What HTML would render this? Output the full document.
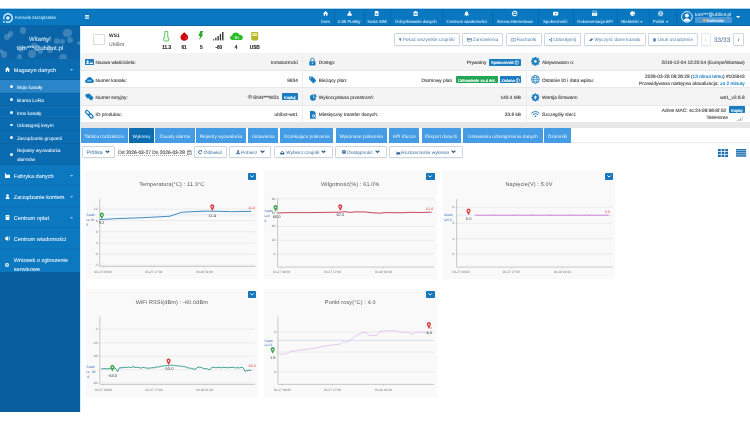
<!DOCTYPE html><html><head><meta charset="utf-8"><style>
*{box-sizing:border-box;margin:0;padding:0}
html,body{width:750px;height:421px;overflow:hidden;background:#fff}
body{font-family:"Liberation Sans",sans-serif;color:#333}
#root{position:absolute;left:0;top:0;width:750px;height:421px;will-change:transform;overflow:hidden;text-rendering:geometricPrecision}
.a{position:absolute}
.t{position:absolute;white-space:nowrap;line-height:1;-webkit-text-stroke-width:0.15px}
svg{position:absolute;overflow:visible}
</style></head><body><div id="root">
<div class="a" style="left:0px;top:8px;width:750px;height:18px;background:#0a78c1"></div>
<div class="a" style="left:0px;top:8px;width:750px;height:1px;background:#9fd4f3"></div>
<div class="a" style="left:0px;top:9px;width:750px;height:1px;background:#0b6eb0"></div>
<div class="a" style="left:0px;top:25px;width:750px;height:1px;background:#0a68a8"></div>
<svg style="left:0px;top:10px" width="20" height="16" viewBox="0 10 20 16"><path d="M3.96 19.47 A4.3 4.3 0 1 1 5.85 21.72" fill="none" stroke="#d4f0ff" stroke-width="1.4"/><circle cx="7.9" cy="18" r="1.8" fill="#e6f7ff"/><rect x="3" y="21.1" width="1.8" height="1.5" fill="#bfe8ff"/></svg>
<div class="t" style="left:15px;top:16px;font-size:4.4px;color:#a9d8f3;">Konsola zarządzania</div>
<div class="a" style="left:85px;top:15.3px;width:4px;height:0.8px;background:#e6f3fb;box-shadow:0 1.4px 0 #e6f3fb,0 2.8px 0 #e6f3fb"></div>
<div class="a" style="left:334px;top:9px;width:1px;height:16px;background:#0a69ab"></div>
<div class="a" style="left:364px;top:9px;width:1px;height:16px;background:#0a69ab"></div>
<div class="a" style="left:390px;top:9px;width:1px;height:16px;background:#0a69ab"></div>
<div class="a" style="left:442px;top:9px;width:1px;height:16px;background:#0a69ab"></div>
<div class="a" style="left:492px;top:9px;width:1px;height:16px;background:#0a69ab"></div>
<div class="a" style="left:538px;top:9px;width:1px;height:16px;background:#0a69ab"></div>
<div class="a" style="left:573px;top:9px;width:1px;height:16px;background:#0a69ab"></div>
<div class="a" style="left:617px;top:9px;width:1px;height:16px;background:#0a69ab"></div>
<div class="a" style="left:649px;top:9px;width:1px;height:16px;background:#0a69ab"></div>
<div class="a" style="left:676px;top:9px;width:1px;height:16px;background:#0a69ab"></div>
<svg style="left:322.59999999999997px;top:11.3px" width="5.2" height="5.2" viewBox="0 0 6 6"><path d="M0 3 L3 0 L6 3 L5.2 3 L5.2 5.5 L3.6 5.5 L3.6 3.8 L2.4 3.8 L2.4 5.5 L0.8 5.5 L0.8 3 Z" fill="#fff"/></svg>
<div class="t" style="left:295.2px;width:60px;text-align:center;top:20px;font-size:4.3px;color:#cfe8f9;-webkit-text-stroke-width:0.05px">Dom</div>
<svg style="left:346.59999999999997px;top:11.3px" width="5.2" height="5.2" viewBox="0 0 6 6"><path d="M1.8 0.3 L4.2 0.3 L3.6 1.6 Q6 3 5.6 5.6 L0.4 5.6 Q0 3 2.4 1.6 Z" fill="#fff"/></svg>
<div class="t" style="left:319.2px;width:60px;text-align:center;top:20px;font-size:4.3px;color:#cfe8f9;-webkit-text-stroke-width:0.05px">0.88 Punkty</div>
<svg style="left:374.4px;top:11.3px" width="5.2" height="5.2" viewBox="0 0 6 6"><path d="M1 0 L4.2 0 L5.2 1 L5.2 5.8 L0.8 5.8 Z" fill="#fff"/><rect x="1.8" y="2.6" width="2.4" height="2.2" fill="#5aa7de"/></svg>
<div class="t" style="left:347.0px;width:60px;text-align:center;top:20px;font-size:4.3px;color:#cfe8f9;-webkit-text-stroke-width:0.05px">Karta SIM</div>
<svg style="left:413.29999999999995px;top:11.3px" width="5.2" height="5.2" viewBox="0 0 6 6"><rect x="0.6" y="0.8" width="4.8" height="5" rx="0.5" fill="#fff"/><rect x="1.8" y="0.2" width="2.4" height="1.2" fill="#fff"/><rect x="1.6" y="2.4" width="2.8" height="2.2" fill="#5aa7de"/></svg>
<div class="t" style="left:385.9px;width:60px;text-align:center;top:20px;font-size:4.3px;color:#cfe8f9;-webkit-text-stroke-width:0.05px">Odzyskiwanie danych</div>
<svg style="left:464.0px;top:11.3px" width="5.2" height="5.2" viewBox="0 0 6 6"><path d="M3 0.2 Q5 0.8 5 3.4 L5.8 4.8 L0.2 4.8 L1 3.4 Q1 0.8 3 0.2 Z" fill="#fff"/><circle cx="3" cy="5.3" r="0.7" fill="#fff"/></svg>
<div class="t" style="left:436.6px;width:60px;text-align:center;top:20px;font-size:4.3px;color:#cfe8f9;-webkit-text-stroke-width:0.05px">Centrum wiadomości</div>
<svg style="left:512.1px;top:11.3px" width="5.2" height="5.2" viewBox="0 0 6 6"><circle cx="3" cy="3" r="2.6" fill="none" stroke="#fff" stroke-width="1.2"/><rect x="1" y="2.6" width="4" height="0.8" fill="#fff"/><rect x="3.6" y="3.4" width="2.4" height="1" fill="#0a78c1"/></svg>
<div class="t" style="left:484.70000000000005px;width:60px;text-align:center;top:20px;font-size:4.3px;color:#cfe8f9;-webkit-text-stroke-width:0.05px">Strona internetowa</div>
<svg style="left:552.6px;top:11.3px" width="5.2" height="5.2" viewBox="0 0 6 6"><rect x="0" y="0.8" width="6" height="4.4" rx="1" fill="#fff"/><path d="M2.4 2 L4 3 L2.4 4 Z" fill="#0a78c1"/></svg>
<div class="t" style="left:525.2px;width:60px;text-align:center;top:20px;font-size:4.3px;color:#cfe8f9;-webkit-text-stroke-width:0.05px">Społeczność</div>
<svg style="left:592.4px;top:11.3px" width="5.2" height="5.2" viewBox="0 0 6 6"><rect x="1" y="0" width="4" height="2.4" fill="none" stroke="#fff" stroke-width="0.6"/><rect x="0" y="2.4" width="6" height="3.2" fill="#fff"/><rect x="1" y="3.4" width="4" height="0.5" fill="#5aa7de"/></svg>
<div class="t" style="left:565.0px;width:60px;text-align:center;top:20px;font-size:4.3px;color:#cfe8f9;-webkit-text-stroke-width:0.05px">Dokumentacja API</div>
<svg style="left:629.6px;top:11.3px" width="5.2" height="5.2" viewBox="0 0 6 6"><circle cx="3" cy="3" r="2.8" fill="#fff"/><circle cx="4" cy="3.8" r="0.6" fill="#0a78c1"/></svg>
<div class="t" style="left:602.2px;width:60px;text-align:center;top:20px;font-size:4.3px;color:#cfe8f9;-webkit-text-stroke-width:0.05px">Niebieski <span style='font-size:3.4px'>▼</span></div>
<svg style="left:658.1999999999999px;top:11.3px" width="5.2" height="5.2" viewBox="0 0 6 6"><circle cx="3" cy="3" r="2.6" fill="none" stroke="#fff" stroke-width="0.7"/><ellipse cx="3" cy="3" rx="1.1" ry="2.6" fill="none" stroke="#fff" stroke-width="0.6"/><line x1="0.4" y1="3" x2="5.6" y2="3" stroke="#fff" stroke-width="0.6"/></svg>
<div class="t" style="left:630.8px;width:60px;text-align:center;top:20px;font-size:4.3px;color:#cfe8f9;-webkit-text-stroke-width:0.05px">Polski <span style='font-size:3.4px'>▼</span></div>
<svg style="left:680.5px;top:11.4px" width="11.8" height="11.8" viewBox="0 0 12 12"><circle cx="6" cy="6" r="5.4" fill="#0a78c1" stroke="#fff" stroke-width="0.9"/><circle cx="6" cy="4.5" r="2" fill="#fff"/><path d="M2.3 9.5 Q6 5.4 9.7 9.5 Q6 12 2.3 9.5 Z" fill="#fff"/></svg>
<div class="t" style="left:695px;top:14px;font-size:4.75px;color:#e3f2fc;-webkit-text-stroke-width:0.05px">tom***@ubibot.pl</div>
<div class="a" style="left:695px;top:17px;width:37px;height:6px;background:#4c98d6;border-radius:0.8px"></div>
<svg style="left:702.8px;top:18.8px" width="2.8" height="2.8" viewBox="0 0 4 4"><circle cx="2" cy="2" r="2" fill="#e6b54f"/></svg>
<div class="t" style="left:706.6px;top:19px;font-size:4.1px;color:#d8ecf9;">Darmowe</div>
<svg style="left:736.4px;top:16px" width="4.2" height="2.2" viewBox="0 0 4 2"><path d="M0 0 L4 0 L2 2 Z" fill="#fff"/></svg>
<div class="a" style="left:0px;top:26px;width:80px;height:386px;background:#095e9d"></div>
<div class="a" style="left:80px;top:26px;width:1px;height:386px;background:#d6edf9"></div>
<div class="a" style="left:0;top:25.5px;width:79.7px;height:33.7px;background:#0b64a8;overflow:hidden">
<div class="a" style="border-radius:50%;background:rgba(255,255,255,0.2);left:19.5px;top:1.4999999999999987px;width:6.8px;height:6.8px"></div>
<div class="a" style="border-radius:50%;background:rgba(255,255,255,0.2);left:3.9000000000000004px;top:8.299999999999997px;width:6px;height:6px"></div>
<div class="a" style="border-radius:50%;background:rgba(255,255,255,0.2);left:7.999999999999999px;top:5.900000000000001px;width:5.4px;height:5.4px"></div>
<div class="a" style="border-radius:50%;background:rgba(255,255,255,0.2);left:63.400000000000006px;top:3.3000000000000016px;width:8.6px;height:8.6px"></div>
<div class="a" style="border-radius:50%;background:rgba(255,255,255,0.2);left:66.5px;top:11.1px;width:6.8px;height:6.8px"></div>
<div class="a" style="border-radius:50%;background:rgba(255,255,255,0.2);left:53.5px;top:12.600000000000001px;width:6px;height:6px"></div>
<div class="a" style="border-radius:50%;background:rgba(255,255,255,0.2);left:60.1px;top:13.8px;width:4.6px;height:4.6px"></div>
<div class="a" style="border-radius:50%;background:rgba(255,255,255,0.2);left:76.80000000000001px;top:15.600000000000003px;width:4.2px;height:4.2px"></div>
<div class="a" style="border-radius:50%;background:rgba(255,255,255,0.2);left:28px;top:24.4px;width:8px;height:8px"></div>
<div class="a" style="border-radius:50%;background:rgba(255,255,255,0.2);left:18.1px;top:19.8px;width:6.4px;height:6.4px"></div>
<div class="a" style="border-radius:50%;background:rgba(255,255,255,0.2);left:31.400000000000002px;top:17.099999999999998px;width:5.4px;height:5.4px"></div>
<div class="a" style="border-radius:50%;background:rgba(255,255,255,0.2);left:-1.0px;top:23.1px;width:4.2px;height:4.2px"></div>
<div class="a" style="border-radius:50%;background:rgba(255,255,255,0.2);left:0.5px;top:25.7px;width:6.4px;height:6.4px"></div>
<div class="a" style="border-radius:50%;background:rgba(255,255,255,0.2);left:16.5px;top:28.900000000000002px;width:5.4px;height:5.4px"></div>
<div class="a" style="border-radius:50%;background:rgba(255,255,255,0.2);left:58.6px;top:28.3px;width:8.6px;height:8.6px"></div>
<div class="a" style="border-radius:50%;background:rgba(255,255,255,0.2);left:46.9px;top:20.900000000000002px;width:6.4px;height:6.4px"></div>
<div class="a" style="border-radius:50%;background:rgba(255,255,255,0.2);left:37.8px;top:23.000000000000004px;width:5.4px;height:5.4px"></div>
<div class="a" style="border-radius:50%;background:rgba(255,255,255,0.2);left:44.8px;top:13.500000000000002px;width:4.2px;height:4.2px"></div>
</div>
<div class="t" style="left:0.5px;width:79px;text-align:center;top:37px;font-size:6.1px;color:#d8edfa;-webkit-text-stroke-width:0.05px">Witamy!</div>
<div class="t" style="left:0.5px;width:79px;text-align:center;top:46px;font-size:6.1px;color:#d8edfa;-webkit-text-stroke-width:0.05px">tom***@ubibot.pl</div>
<div class="a" style="left:0px;top:59px;width:80px;height:21px;background:#0b6bb0;border-bottom:0.5px solid rgba(0,30,60,0.07)"></div>
<div class="t" style="left:13.8px;top:69px;font-size:5.6px;color:#eef7fd;-webkit-text-stroke-width:0.05px">Magazyn danych</div>
<svg style="left:4.9px;top:66.75px" width="5" height="5" viewBox="0 0 4 4"><path d="M0 2 L2 0 L4 2 L3.4 2 L3.4 4 L2.4 4 L2.4 2.8 L1.6 2.8 L1.6 4 L0.6 4 L0.6 2 Z" fill="#fff"/></svg>
<svg style="left:69.8px;top:68.75px" width="3.2" height="1.8" viewBox="0 0 2 1"><path d="M0 0 L2 0 L1 1 Z" fill="#94c8ee"/></svg>
<div class="a" style="left:0px;top:80px;width:80px;height:13px;background:#2a86c8;border-bottom:0.5px solid rgba(0,30,60,0.07)"></div>
<div class="a" style="left:10px;top:85px;width:3px;height:3px;border-radius:50%;background:#f4fafe"></div>
<div class="t" style="left:16.9px;top:87px;font-size:4.8px;color:#eef7fd;-webkit-text-stroke-width:0.05px">Moje kanały</div>
<div class="a" style="left:0px;top:93px;width:80px;height:13px;background:#0b6bb0;border-bottom:0.5px solid rgba(0,30,60,0.07)"></div>
<div class="a" style="left:10px;top:98px;width:3px;height:3px;border-radius:50%;background:#f4fafe"></div>
<div class="t" style="left:16.9px;top:100px;font-size:4.8px;color:#eef7fd;-webkit-text-stroke-width:0.05px">Brama LoRa</div>
<div class="a" style="left:0px;top:106px;width:80px;height:13px;background:#0b6bb0;border-bottom:0.5px solid rgba(0,30,60,0.07)"></div>
<div class="a" style="left:10px;top:111px;width:3px;height:3px;border-radius:50%;background:#f4fafe"></div>
<div class="t" style="left:16.9px;top:113px;font-size:4.8px;color:#eef7fd;-webkit-text-stroke-width:0.05px">Inne kanały</div>
<div class="a" style="left:0px;top:119px;width:80px;height:12px;background:#0b6bb0;border-bottom:0.5px solid rgba(0,30,60,0.07)"></div>
<div class="a" style="left:10px;top:124px;width:3px;height:2px;border-radius:50%;background:#f4fafe"></div>
<div class="t" style="left:16.9px;top:125px;font-size:4.8px;color:#eef7fd;-webkit-text-stroke-width:0.05px">Udostępnij innym</div>
<div class="a" style="left:0px;top:131px;width:80px;height:13px;background:#0b6bb0;border-bottom:0.5px solid rgba(0,30,60,0.07)"></div>
<div class="a" style="left:10px;top:136px;width:3px;height:3px;border-radius:50%;background:#f4fafe"></div>
<div class="t" style="left:16.9px;top:138px;font-size:4.8px;color:#eef7fd;-webkit-text-stroke-width:0.05px">Zarządzanie grupami</div>
<div class="a" style="left:0px;top:144px;width:80px;height:21px;background:#0b6bb0;border-bottom:0.5px solid rgba(0,30,60,0.07)"></div>
<div class="a" style="left:10px;top:153px;width:3px;height:3px;border-radius:50%;background:#f4fafe"></div>
<div class="t" style="left:16.9px;top:150px;font-size:4.8px;color:#eef7fd;-webkit-text-stroke-width:0.05px">Rejestry wyzwalania</div>
<div class="t" style="left:16.9px;top:159px;font-size:4.8px;color:#eef7fd;-webkit-text-stroke-width:0.05px">alarmów</div>
<div class="a" style="left:0px;top:165px;width:80px;height:21px;background:#0c78c0;border-bottom:0.5px solid rgba(0,30,60,0.07)"></div>
<div class="t" style="left:13.8px;top:175px;font-size:5.6px;color:#eef7fd;-webkit-text-stroke-width:0.05px">Fabryka danych</div>
<svg style="left:4.9px;top:173.0px" width="5" height="5" viewBox="0 0 4 4"><path d="M0 4 L0 0.2 L0.9 0.2 L0.9 1.8 L2 1.0 L2 1.8 L3.1 1.0 L3.1 1.8 L4 1.2 L4 4 Z" fill="#fff"/></svg>
<svg style="left:69.8px;top:175.0px" width="3.2" height="1.8" viewBox="0 0 2 1"><path d="M0 0 L2 0 L1 1 Z" fill="#94c8ee"/></svg>
<div class="a" style="left:0px;top:186px;width:80px;height:21px;background:#0c78c0;border-bottom:0.5px solid rgba(0,30,60,0.07)"></div>
<div class="t" style="left:13.8px;top:196px;font-size:5.6px;color:#eef7fd;-webkit-text-stroke-width:0.05px">Zarządzanie kontem</div>
<svg style="left:4.9px;top:194.1px" width="5" height="5" viewBox="0 0 4 4"><circle cx="2" cy="1.1" r="1" fill="#fff"/><path d="M0.4 4 L1 2.2 L3 2.2 L3.6 4 Z" fill="#fff"/></svg>
<svg style="left:69.8px;top:196.1px" width="3.2" height="1.8" viewBox="0 0 2 1"><path d="M0 0 L2 0 L1 1 Z" fill="#94c8ee"/></svg>
<div class="a" style="left:0px;top:207px;width:80px;height:21px;background:#0c78c0;border-bottom:0.5px solid rgba(0,30,60,0.07)"></div>
<div class="t" style="left:13.8px;top:217px;font-size:5.6px;color:#eef7fd;-webkit-text-stroke-width:0.05px">Centrum opłat</div>
<svg style="left:4.9px;top:215.3px" width="5" height="5" viewBox="0 0 4 4"><rect x="0.5" y="0" width="3" height="4" rx="0.4" fill="#fff"/><rect x="1" y="0.8" width="2" height="0.4" fill="#0b70b7"/></svg>
<svg style="left:69.8px;top:217.3px" width="3.2" height="1.8" viewBox="0 0 2 1"><path d="M0 0 L2 0 L1 1 Z" fill="#94c8ee"/></svg>
<div class="a" style="left:0px;top:228px;width:80px;height:22px;background:#0c78c0;border-bottom:0.5px solid rgba(0,30,60,0.07)"></div>
<div class="t" style="left:13.8px;top:238px;font-size:5.6px;color:#eef7fd;-webkit-text-stroke-width:0.05px">Centrum wiadomości</div>
<svg style="left:4.9px;top:236.35px" width="5" height="5" viewBox="0 0 4 4"><path d="M0 1.4 L2.4 0.2 L2.4 3.8 L0 2.6 Z" fill="#fff"/><rect x="3" y="0.4" width="0.6" height="3.2" fill="#fff"/></svg>
<div class="a" style="left:0;top:249.5px;width:79.7px;height:22.2px;background:#0c78c0;overflow:hidden">
<div class="t" style="left:13.8px;top:9px;font-size:5.6px;color:#eef7fd;-webkit-text-stroke-width:0.05px">Wniosek o zgłoszenie</div>
<div class="t" style="left:13.8px;top:18px;font-size:5.6px;color:#eef7fd;-webkit-text-stroke-width:0.05px">serwisowe</div>
</div>
<svg style="left:5.4px;top:263px" width="4" height="4" viewBox="0 0 4 4"><circle cx="2" cy="2" r="2" fill="#fff"/><rect x="1.7" y="0.6" width="0.6" height="2.8" fill="#0c78c0"/><rect x="0.6" y="1.7" width="2.8" height="0.6" fill="#0c78c0"/></svg>
<div class="a" style="left:93px;top:34px;width:12px;height:11px;border:0.6px solid #dcdcdc;border-radius:0.8px;background:#fff"></div>
<div class="t" style="left:109.1px;top:35px;font-size:4.85px;color:#222;font-weight:bold;-webkit-text-stroke-width:0">WS1</div>
<div class="t" style="left:109.1px;top:43px;font-size:5px;color:#8a8a8a;">UbiBot</div>
<svg style="left:163.4px;top:30.8px" width="6.4" height="10.4" viewBox="0 0 6.4 10.4"><path d="M1.7 1.2 Q1.7 0.4 3.2 0.4 Q4.7 0.4 4.7 1.2 L4.7 6.3 Q6 7.1 6 8.3 Q6 10.1 3.2 10.1 Q0.4 10.1 0.4 8.3 Q0.4 7.1 1.7 6.3 Z" fill="#fff" stroke="#6fcb6f" stroke-width="1.1"/><circle cx="3.2" cy="8.3" r="0.9" fill="#dff3df"/></svg>
<svg style="left:180px;top:31.8px" width="8.6" height="8.8" viewBox="0 0 8.6 8.8"><path d="M4.3 0.2 Q6 1.6 7.6 3.6 Q8.8 5.8 7.4 7.4 Q6 8.8 4.3 8.8 Q2.4 8.8 1.2 7.4 Q-0.2 5.6 1 3.6 Q2.4 1.6 4.3 0.2 Z" fill="#cc0a0a"/><path d="M5.6 6.6 L6.6 5.8" stroke="#fff" stroke-width="0.6"/></svg>
<svg style="left:198.4px;top:31px" width="5.6" height="9.2" viewBox="0 0 5.6 9.2"><path d="M2.4 0 L5.2 0 L3.4 3.2 L5.4 3.2 L1 9.2 L2.2 5 L0.4 5 Z" fill="#22aa22"/></svg>
<svg style="left:213.4px;top:32px" width="10.8" height="8.6" viewBox="0 0 10.8 8.6"><rect x="0" y="7.2" width="1.2" height="1.2" fill="#333"/><rect x="2.2" y="5.6" width="1.3" height="2.8" fill="#333"/><rect x="4.5" y="4" width="1.3" height="4.4" fill="#333"/><rect x="6.8" y="2" width="1.3" height="6.4" fill="#333"/><rect x="9.1" y="0" width="1.4" height="8.4" fill="#333"/></svg>
<svg style="left:229.6px;top:31.8px" width="12.8" height="8" viewBox="0 0 12.8 8"><path d="M2.6 8 Q0 8 0 5.6 Q0 3.6 2.2 3.4 Q2.6 0.4 5.8 0.4 Q8.6 0.4 9.4 2.8 Q12.8 2.8 12.8 5.4 Q12.8 8 10.2 8 Z" fill="#2bbb2b"/><text x="6.8" y="6.6" font-size="4.2" font-weight="bold" fill="#e8ffe8" text-anchor="middle" font-family="Liberation Sans">fn</text></svg>
<svg style="left:251px;top:31.8px" width="7.4" height="8.6" viewBox="0 0 7.4 8.6"><path d="M0.2 0.8 Q0.2 0 1 0 L6.4 0 Q7.2 0 7.2 0.8 L7.2 6.4 Q7.2 8.6 3.7 8.6 Q0.2 8.6 0.2 6.4 Z" fill="#b5b52a"/><rect x="1.2" y="0.9" width="5" height="3" rx="0.3" fill="#ecebb0"/><rect x="2" y="1.7" width="1.1" height="0.9" fill="#b5b52a"/><rect x="4.3" y="1.7" width="1.1" height="0.9" fill="#b5b52a"/></svg>
<div class="t" style="left:151.7px;width:30px;text-align:center;top:46px;font-size:4.7px;color:#222;font-weight:bold;text-rendering:optimizeLegibility;-webkit-text-stroke-width:0.12px">11.3</div>
<div class="t" style="left:169.0px;width:30px;text-align:center;top:46px;font-size:4.7px;color:#222;font-weight:bold;text-rendering:optimizeLegibility;-webkit-text-stroke-width:0.12px">61</div>
<div class="t" style="left:186.2px;width:30px;text-align:center;top:46px;font-size:4.7px;color:#222;font-weight:bold;text-rendering:optimizeLegibility;-webkit-text-stroke-width:0.12px">5</div>
<div class="t" style="left:203.8px;width:30px;text-align:center;top:46px;font-size:4.7px;color:#222;font-weight:bold;text-rendering:optimizeLegibility;-webkit-text-stroke-width:0.12px">-60</div>
<div class="t" style="left:221.0px;width:30px;text-align:center;top:46px;font-size:4.7px;color:#222;font-weight:bold;text-rendering:optimizeLegibility;-webkit-text-stroke-width:0.12px">4</div>
<div class="t" style="left:239.8px;width:30px;text-align:center;top:46px;font-size:4.7px;color:#222;font-weight:bold;text-rendering:optimizeLegibility;-webkit-text-stroke-width:0.12px">USB</div>
<div class="a" style="left:394px;top:33px;width:66px;height:13px;border:0.6px solid #cbd6df;border-radius:1.2px;background:#fff;box-shadow:0 0.6px 0.5px rgba(0,0,0,0.07)"></div>
<div class="t" style="left:393.6px;width:66.19999999999999px;text-align:center;top:39px;font-size:4.75px;color:#4a7eab;-webkit-text-stroke-width:0px"><span style="display:inline-block;position:relative;width:3.8px;height:0"><svg style="position:absolute;left:0px;top:-4.2px" width="2.6" height="4.8" viewBox="0 0 3 4.4"><path d="M1.5 4.3 L0.4 2.2 A1.3 1.3 0 1 1 2.6 2.2 Z" fill="#4a7eab"/><circle cx="1.5" cy="1.5" r="0.55" fill="#fff"/></svg></span>Pokaż wszystkie czujniki</div>
<div class="a" style="left:462px;top:33px;width:41px;height:13px;border:0.6px solid #cbd6df;border-radius:1.2px;background:#fff;box-shadow:0 0.6px 0.5px rgba(0,0,0,0.07)"></div>
<div class="t" style="left:462.0px;width:41.39999999999998px;text-align:center;top:39px;font-size:4.75px;color:#4a7eab;-webkit-text-stroke-width:0px"><span style="display:inline-block;position:relative;width:5.6px;height:0"><svg style="position:absolute;left:0px;top:-3.20px" width="4.6" height="3.4" viewBox="0 0 4.6 3.4"><rect x="0.25" y="0.25" width="4.1" height="2.9" fill="none" stroke="#3f73a3" stroke-width="0.5"/><rect x="0.25" y="0.9" width="4.1" height="0.7" fill="#3f73a3"/></svg></span>Zamówienia</div>
<div class="a" style="left:506px;top:33px;width:36px;height:13px;border:0.6px solid #cbd6df;border-radius:1.2px;background:#fff;box-shadow:0 0.6px 0.5px rgba(0,0,0,0.07)"></div>
<div class="t" style="left:505.70000000000005px;width:36.00000000000006px;text-align:center;top:39px;font-size:4.75px;color:#4a7eab;-webkit-text-stroke-width:0px"><span style="display:inline-block;position:relative;width:5.6px;height:0"><svg style="position:absolute;left:0px;top:-3.30px" width="4.6" height="3.6" viewBox="0 0 4.6 3.6"><path d="M0.25 0.3 L2.3 0.6 L4.35 0.3 L4.35 3.3 L2.3 3.0 L0.25 3.3 Z M2.3 0.6 L2.3 3" fill="none" stroke="#3f73a3" stroke-width="0.45"/></svg></span>Rachunki</div>
<div class="a" style="left:544px;top:33px;width:37px;height:13px;border:0.6px solid #cbd6df;border-radius:1.2px;background:#fff;box-shadow:0 0.6px 0.5px rgba(0,0,0,0.07)"></div>
<div class="t" style="left:543.8px;width:37.60000000000002px;text-align:center;top:39px;font-size:4.75px;color:#4a7eab;-webkit-text-stroke-width:0px"><span style="display:inline-block;position:relative;width:4.4px;height:0"><svg style="position:absolute;left:0px;top:-3.40px" width="3.4" height="3.6" viewBox="0 0 3.4 3.6"><circle cx="2.7" cy="0.7" r="0.7" fill="#3f73a3"/><circle cx="0.7" cy="1.8" r="0.7" fill="#3f73a3"/><circle cx="2.7" cy="2.9" r="0.7" fill="#3f73a3"/><path d="M2.7 0.7 L0.7 1.8 L2.7 2.9" fill="none" stroke="#3f73a3" stroke-width="0.4"/></svg></span>Udostępnij</div>
<div class="a" style="left:584px;top:33px;width:62px;height:13px;border:0.6px solid #cbd6df;border-radius:1.2px;background:#fff;box-shadow:0 0.6px 0.5px rgba(0,0,0,0.07)"></div>
<div class="t" style="left:583.7px;width:62.09999999999991px;text-align:center;top:39px;font-size:4.75px;color:#4a7eab;-webkit-text-stroke-width:0px"><span style="display:inline-block;position:relative;width:5.4px;height:0"><svg style="position:absolute;left:0px;top:-3.10px" width="4.4" height="3.2" viewBox="0 0 4.4 3.2"><path d="M0.2 2.4 L2.6 0.2 L4.2 1.2 L2.2 3.0 L0.8 3.0 Z" fill="#3f73a3"/></svg></span>Wyczyść dane kanału</div>
<div class="a" style="left:648px;top:33px;width:50px;height:13px;border:0.6px solid #cbd6df;border-radius:1.2px;background:#fff;box-shadow:0 0.6px 0.5px rgba(0,0,0,0.07)"></div>
<div class="t" style="left:648.3px;width:49.90000000000009px;text-align:center;top:39px;font-size:4.75px;color:#4a7eab;-webkit-text-stroke-width:0px"><span style="display:inline-block;position:relative;width:4.0px;height:0"><svg style="position:absolute;left:0px;top:-3.30px" width="3.0" height="3.6" viewBox="0 0 3 3.6"><rect x="0" y="0.3" width="3" height="0.5" fill="#3f73a3"/><path d="M0.3 1 L2.7 1 L2.5 3.6 L0.5 3.6 Z" fill="#3f73a3"/></svg></span>Usuń urządzenie</div>
<div class="a" style="left:701px;top:33px;width:10px;height:13px;border:0.6px solid #e3e7ea;border-radius:1.2px;background:#fff;box-shadow:0 0.6px 0.5px rgba(0,0,0,0.07)"></div>
<div class="t" style="left:701.3px;width:9px;text-align:center;top:38px;font-size:5px;color:#c8c8c8;">‹</div>
<div class="t" style="left:714px;top:38px;font-size:6.5px;color:#57799a;-webkit-text-stroke-width:0.03px">33/33</div>
<div class="a" style="left:733px;top:33px;width:11px;height:13px;border:0.6px solid #cbd6df;border-radius:1.2px;background:#fff;box-shadow:0 0.6px 0.5px rgba(0,0,0,0.07)"></div>
<div class="t" style="left:734.2px;width:9px;text-align:center;top:38px;font-size:5px;color:#555;">›</div>
<div class="a" style="left:81px;top:53px;width:669px;height:1px;background:#e8e8e8"></div>
<div class="a" style="left:81px;top:53px;width:669px;height:18px;background:#f4f4f4;border-bottom:0.5px solid #e8e8e8"></div>
<div class="a" style="left:81px;top:71px;width:669px;height:17px;background:#fff;border-bottom:0.5px solid #e8e8e8"></div>
<div class="a" style="left:81px;top:88px;width:669px;height:18px;background:#f4f4f4;border-bottom:0.5px solid #e8e8e8"></div>
<div class="a" style="left:81px;top:106px;width:669px;height:17px;background:#fff;border-bottom:0.5px solid #e8e8e8"></div>
<div class="a" style="left:302px;top:53px;width:1px;height:70px;background:#ededed"></div>
<div class="a" style="left:526px;top:53px;width:1px;height:70px;background:#ededed"></div>
<div class="a" style="left:81px;top:123px;width:669px;height:5px;background:#e7e7e7"></div>
<svg style="left:85px;top:58.7px" width="9" height="6" viewBox="0 0 9 6"><rect x="0" y="0" width="9" height="6" rx="0.6" fill="#1b7dc0"/><circle cx="2.6" cy="2.2" r="1" fill="#fff"/><rect x="1.4" y="3.4" width="2.4" height="1.6" fill="#fff"/><rect x="4.8" y="3.6" width="3" height="1.4" fill="#fff"/></svg>
<svg style="left:85px;top:76.55px" width="9" height="6" viewBox="0 0 9 6"><path d="M2 6 Q0 6 0 4.2 Q0 2.8 1.6 2.6 Q2 0 4.6 0 Q7 0 7.4 2.2 Q9 2.4 9 4.2 Q9 6 7 6 Z" fill="#1b7dc0"/><rect x="2.4" y="3.2" width="4" height="1.2" fill="#9fd0f0"/></svg>
<svg style="left:84px;top:92px" width="12" height="10" viewBox="84 92 12 10"><path d="M85.6 94.2 L89.2 93.4 L93.6 97.6 L91.6 100.4 L89.6 99.6 L88.6 98.2 L87.2 98.4 L86.6 97 L85.2 96.6 Z" fill="#1b7dc0"/></svg>
<svg style="left:85px;top:110.3px" width="8.6" height="8.6" viewBox="0 0 10 10"><g transform="rotate(-45 5 5)" fill="none" stroke="#1b7dc0" stroke-width="1.5"><rect x="3.4" y="-0.6" width="3.2" height="6" rx="1.6"/><rect x="3.4" y="4.6" width="3.2" height="6" rx="1.6"/></g></svg>
<div class="t" style="left:95.6px;top:62px;font-size:4.8px;color:#505050;">Nazwa właściciela:</div>
<div class="t" style="left:95.6px;top:80px;font-size:4.8px;color:#505050;">Numer kanału:</div>
<div class="t" style="left:95.6px;top:97px;font-size:4.8px;color:#505050;">Numer seryjny:</div>
<div class="t" style="left:95.6px;top:114px;font-size:4.8px;color:#505050;">ID produktu:</div>
<div class="t" style="left:-2.1999999999999886px;width:300px;text-align:right;top:62px;font-size:4.8px;color:#505050;">tomasztrocki</div>
<div class="t" style="left:-2.1999999999999886px;width:300px;text-align:right;top:80px;font-size:4.8px;color:#505050;">9934</div>
<div class="a" style="left:282px;top:93px;width:16px;height:7px;background:#1b7dc0;border-radius:0.8px"></div>
<div class="t" style="left:281.8px;width:16px;text-align:center;top:96px;font-size:4px;color:#fff;">Kopiuj</div>
<div class="t" style="left:-20.80000000000001px;width:300px;text-align:right;top:97px;font-size:4.8px;color:#505050;">SNN***WS1</div>
<svg style="left:248.2px;top:95.2px" width="4" height="3.6" viewBox="0 0 4 3.6"><ellipse cx="2" cy="1.8" rx="1.9" ry="1.5" fill="none" stroke="#555" stroke-width="0.6"/><circle cx="2" cy="1.8" r="0.7" fill="#555"/></svg>
<div class="t" style="left:-2.1999999999999886px;width:300px;text-align:right;top:114px;font-size:4.8px;color:#505050;">ubibot-ws1</div>
<svg style="left:309.3px;top:57.900000000000006px" width="6.8" height="7.6" viewBox="0 0 6.8 7.6"><path d="M1.6 3.2 L1.6 2 Q1.6 0.3 3.4 0.3 Q5.2 0.3 5.2 2 L5.2 3.2" fill="none" stroke="#1b7dc0" stroke-width="0.9"/><rect x="0.3" y="3.2" width="6.2" height="4.3" rx="0.5" fill="#1b7dc0"/><circle cx="3.4" cy="5.2" r="0.6" fill="#fff"/></svg>
<svg style="left:309px;top:75.75px" width="7.6" height="7.4" viewBox="0 0 7.6 7.4"><path d="M0 0.4 L3.4 0.4 L7.4 4.4 L4.4 7.4 L0.4 3.4 Z" fill="#1b7dc0"/><circle cx="1.7" cy="1.8" r="0.6" fill="#fff"/></svg>
<svg style="left:309.5px;top:93.8px" width="6.6" height="6.6" viewBox="0 0 6.6 6.6"><path d="M3.0 3.6 L3.0 0.5 A3.1 3.1 0 1 0 6.1 3.6 Z" fill="#1b7dc0"/><path d="M3.6 3.0 L3.6 0 A3 3 0 0 1 6.6 3.0 Z" fill="#1b7dc0"/></svg>
<svg style="left:309.6px;top:110.7px" width="6.4" height="7.8" viewBox="0 0 6.4 7.8"><path d="M0 0 L4 0 L5.6 1.6 L5.6 7.8 L0 7.8 Z" fill="#1b7dc0"/><circle cx="3.6" cy="5" r="1.4" fill="#fff"/><circle cx="3.6" cy="5" r="0.8" fill="#1b7dc0"/></svg>
<div class="t" style="left:318.8px;top:62px;font-size:4.8px;color:#505050;">Dostęp:</div>
<div class="t" style="left:318.8px;top:80px;font-size:4.8px;color:#505050;">Bieżący plan:</div>
<div class="t" style="left:318.8px;top:97px;font-size:4.8px;color:#505050;">Wykorzystana przestrzeń:</div>
<div class="t" style="left:318.8px;top:114px;font-size:4.8px;color:#505050;">Miesięczny transfer danych:</div>
<div class="t" style="left:186.39999999999998px;width:300px;text-align:right;top:62px;font-size:4.8px;color:#505050;">Prywatny</div>
<div class="a" style="left:489px;top:59px;width:32px;height:7px;background:#1b7dc0;border-radius:0.8px"></div>
<div class="t" style="left:488.95px;width:32px;text-align:center;top:61px;font-size:4px;color:#fff;">Społeczność ⓘ</div>
<div class="t" style="left:152.2px;width:300px;text-align:right;top:80px;font-size:4.8px;color:#505050;">Darmowy plan</div>
<div class="a" style="left:456px;top:76px;width:42px;height:7px;background:#22a556;border-radius:0.8px"></div>
<div class="t" style="left:455.85px;width:42px;text-align:center;top:79px;font-size:4px;color:#fff;">Odnowienie za 4 dni.</div>
<div class="a" style="left:500px;top:76px;width:21px;height:7px;background:#1b7dc0;border-radius:0.8px"></div>
<div class="t" style="left:500.1px;width:21px;text-align:center;top:79px;font-size:4px;color:#fff;">Zmiana ⓘ</div>
<div class="t" style="left:221px;width:300px;text-align:right;top:97px;font-size:4.8px;color:#505050;">140.4 MB</div>
<div class="t" style="left:221px;width:300px;text-align:right;top:114px;font-size:4.8px;color:#505050;">33.6 kB</div>
<svg style="left:531.4px;top:57.400000000000006px" width="8.8" height="8.8" viewBox="-5 -5 10 10"><g fill="#1b7dc0"><rect x="-1.1" y="-5" width="2.2" height="10" transform="rotate(0)"/><rect x="-1.1" y="-5" width="2.2" height="10" transform="rotate(45)"/><rect x="-1.1" y="-5" width="2.2" height="10" transform="rotate(90)"/><rect x="-1.1" y="-5" width="2.2" height="10" transform="rotate(135)"/></g><circle r="3.6" fill="#1b7dc0"/><circle r="1.5" fill="#f4f4f4"/></svg>
<svg style="left:531.4px;top:74.94999999999999px" width="8.8" height="8.8" viewBox="0 0 10 10"><circle cx="5" cy="5" r="4.5" fill="none" stroke="#1b7dc0" stroke-width="0.9"/><ellipse cx="5" cy="5" rx="2" ry="4.5" fill="none" stroke="#1b7dc0" stroke-width="0.8"/><line x1="0.5" y1="5" x2="9.5" y2="5" stroke="#1b7dc0" stroke-width="0.8"/><line x1="1.2" y1="2.8" x2="8.8" y2="2.8" stroke="#1b7dc0" stroke-width="0.7"/><line x1="1.2" y1="7.2" x2="8.8" y2="7.2" stroke="#1b7dc0" stroke-width="0.7"/></svg>
<svg style="left:531.4px;top:92.6px" width="8.8" height="8.8" viewBox="0 0 10 10"><path d="M5 0 L6.4 1.6 L8.5 1.5 L8.4 3.6 L10 5 L8.4 6.4 L8.5 8.5 L6.4 8.4 L5 10 L3.6 8.4 L1.5 8.5 L1.6 6.4 L0 5 L1.6 3.6 L1.5 1.5 L3.6 1.6 Z" fill="#1b7dc0"/><path d="M5 2.6 L7 5 L5.8 5 L5.8 7 L4.2 7 L4.2 5 L3 5 Z" fill="#f4f4f4"/></svg>
<svg style="left:531.4px;top:111.1px" width="8.8" height="6.4" viewBox="0 0 10 7.2"><path d="M0.4 2.6 Q5 -1.4 9.6 2.6" fill="none" stroke="#1b7dc0" stroke-width="1.1"/><path d="M2 4.2 Q5 1.6 8 4.2" fill="none" stroke="#1b7dc0" stroke-width="1.1"/><path d="M3.6 5.6 Q5 4.6 6.4 5.6 L5 7.2 Z" fill="#1b7dc0"/></svg>
<div class="t" style="left:542px;top:62px;font-size:4.8px;color:#505050;">Aktywowano o:</div>
<div class="t" style="left:542px;top:80px;font-size:4.8px;color:#505050;">Ostatnie ID i data wpisu:</div>
<div class="t" style="left:542px;top:97px;font-size:4.8px;color:#505050;">Wersja firmware:</div>
<div class="t" style="left:542px;top:114px;font-size:4.8px;color:#505050;">Szczegóły sieci:</div>
<div class="t" style="left:444.6px;width:300px;text-align:right;top:62px;font-size:4.8px;color:#505050;">2019-12-04 13:20:54 (Europe/Warsaw)</div>
<div class="t" style="left:444.6px;width:300px;text-align:right;top:76px;font-size:4.8px;color:#505050;">2026-03-28 08:26:28 (<span style="color:#1b7dc0">13 minut temu</span>) #105843</div>
<div class="t" style="left:444.6px;width:300px;text-align:right;top:83px;font-size:4.8px;color:#505050;">Przewidywana następna aktualizacja: <span style="color:#1b7dc0">za 2 minuty</span></div>
<div class="t" style="left:444.6px;width:300px;text-align:right;top:97px;font-size:4.8px;color:#505050;">ws1_v2.6.8</div>
<div class="t" style="left:426px;width:300px;text-align:right;top:110px;font-size:4.8px;color:#505050;">Adres MAC: 4c:24:98:96:8f:53</div>
<div class="a" style="left:729px;top:106px;width:16px;height:7px;background:#1b7dc0;border-radius:0.8px"></div>
<div class="t" style="left:728.9px;width:16px;text-align:center;top:109px;font-size:4px;color:#fff;">Kopiuj</div>
<div class="t" style="left:428px;width:300px;text-align:right;top:117px;font-size:4.8px;color:#505050;">TeleHome</div>
<svg style="left:737px;top:116.2px" width="6.6" height="4.8" viewBox="0 0 6.6 4.8"><rect x="0" y="4" width="0.8" height="0.8" fill="#888"/><rect x="1.6" y="3.2" width="0.8" height="1.6" fill="#888"/><rect x="3.2" y="2.2" width="0.8" height="2.6" fill="#999"/><rect x="4.8" y="0.6" width="0.8" height="4.2" fill="#bbb"/></svg>
<div class="a" style="left:81px;top:142px;width:669px;height:1px;background:#ececec"></div>
<div class="a" style="left:81px;top:128px;width:47px;height:15px;background:#449ce4;border-radius:0.6px 0.6px 0 0"></div>
<div class="t" style="left:78.5px;width:51.2px;text-align:center;top:135px;font-size:4.7px;color:#eaf5fe;-webkit-text-stroke-width:0">Tablica rozdzielcza</div>
<div class="a" style="left:129px;top:128px;width:25px;height:15px;background:#0b6cb0;border-radius:0.6px 0.6px 0 0"></div>
<div class="t" style="left:127.10000000000001px;width:28.900000000000006px;text-align:center;top:135px;font-size:4.7px;color:#eaf5fe;-webkit-text-stroke-width:0">Wykresy</div>
<div class="a" style="left:155px;top:128px;width:40px;height:15px;background:#449ce4;border-radius:0.6px 0.6px 0 0"></div>
<div class="t" style="left:153.09999999999997px;width:43.70000000000002px;text-align:center;top:135px;font-size:4.7px;color:#eaf5fe;-webkit-text-stroke-width:0">Zasady alarmu</div>
<div class="a" style="left:196px;top:128px;width:50px;height:15px;background:#449ce4;border-radius:0.6px 0.6px 0 0"></div>
<div class="t" style="left:194.09999999999997px;width:53.70000000000002px;text-align:center;top:135px;font-size:4.7px;color:#eaf5fe;-webkit-text-stroke-width:0">Rejestry wyzwalania</div>
<div class="a" style="left:248px;top:128px;width:30px;height:15px;background:#449ce4;border-radius:0.6px 0.6px 0 0"></div>
<div class="t" style="left:246.0px;width:34.39999999999998px;text-align:center;top:135px;font-size:4.7px;color:#eaf5fe;-webkit-text-stroke-width:0">Ustawienia</div>
<div class="a" style="left:280px;top:128px;width:53px;height:15px;background:#449ce4;border-radius:0.6px 0.6px 0 0"></div>
<div class="t" style="left:278.0px;width:57.39999999999998px;text-align:center;top:135px;font-size:4.7px;color:#eaf5fe;-webkit-text-stroke-width:0">Oczekujące polecenia</div>
<div class="a" style="left:336px;top:128px;width:51px;height:15px;background:#449ce4;border-radius:0.6px 0.6px 0 0"></div>
<div class="t" style="left:333.7px;width:55.10000000000002px;text-align:center;top:135px;font-size:4.7px;color:#eaf5fe;-webkit-text-stroke-width:0">Wykonane polecenia</div>
<div class="a" style="left:389px;top:128px;width:30px;height:15px;background:#449ce4;border-radius:0.6px 0.6px 0 0"></div>
<div class="t" style="left:387.3px;width:34.0px;text-align:center;top:135px;font-size:4.7px;color:#eaf5fe;-webkit-text-stroke-width:0">API Klucze</div>
<div class="a" style="left:422px;top:128px;width:39px;height:15px;background:#449ce4;border-radius:0.6px 0.6px 0 0"></div>
<div class="t" style="left:419.5px;width:43.5px;text-align:center;top:135px;font-size:4.7px;color:#eaf5fe;-webkit-text-stroke-width:0">Eksport danych</div>
<div class="a" style="left:463px;top:128px;width:80px;height:15px;background:#449ce4;border-radius:0.6px 0.6px 0 0"></div>
<div class="t" style="left:461.29999999999995px;width:83.40000000000003px;text-align:center;top:135px;font-size:4.7px;color:#eaf5fe;-webkit-text-stroke-width:0">Ustawienia udostępniania danych</div>
<div class="a" style="left:544px;top:128px;width:27px;height:15px;background:#449ce4;border-radius:0.6px 0.6px 0 0"></div>
<div class="t" style="left:542.3px;width:30.5px;text-align:center;top:135px;font-size:4.7px;color:#eaf5fe;-webkit-text-stroke-width:0">Dzienniki</div>
<div class="a" style="left:82px;top:146px;width:33px;height:12px;border:0.6px solid #cbd6df;border-radius:1.2px;background:#fff;box-shadow:0 0.6px 0.5px rgba(0,0,0,0.07)"></div>
<div class="t" style="left:79.70000000000002px;width:36.89999999999999px;text-align:center;top:151px;font-size:5.0px;color:#4a7eab;-webkit-text-stroke-width:0.05px">Próbka<span style="display:inline-block;position:relative;width:7.2px;height:0"><svg style="position:absolute;left:2.2px;top:-3.6px" width="5" height="3.2" viewBox="0 0 5 3.2"><path d="M0.6 0.6 L2.5 2.5 L4.4 0.6" fill="none" stroke="#2a5e8e" stroke-width="1.25"/></svg></span></div>
<div class="t" style="left:118px;top:152px;font-size:4.9px;color:#555;">Od 2026-03-27 Do 2026-03-28</div>
<div class="a" style="left:118px;top:155.2px;width:68.6px;height:0;border-bottom:0.5px dotted #aaa"></div>
<svg style="left:187px;top:149.9px" width="4.6" height="5" viewBox="0 0 4.6 5"><rect x="0" y="0.5" width="4.6" height="4.5" rx="0.3" fill="#8a8a8a"/><rect x="0.6" y="1.8" width="3.4" height="2.6" fill="#d8d8d8"/><rect x="1" y="0" width="0.6" height="1" fill="#8a8a8a"/><rect x="3" y="0" width="0.6" height="1" fill="#8a8a8a"/></svg>
<div class="a" style="left:194px;top:146px;width:33px;height:12px;border:0.6px solid #cbd6df;border-radius:1.2px;background:#fff;box-shadow:0 0.6px 0.5px rgba(0,0,0,0.07)"></div>
<div class="t" style="left:192.0px;width:36.69999999999999px;text-align:center;top:152px;font-size:4.8px;color:#4a7eab;-webkit-text-stroke-width:0.05px"><span style="display:inline-block;position:relative;width:5.4px;height:0"><svg style="position:absolute;left:0;top:-3.9000000000000004px" width="4.2" height="4.2" viewBox="0 0 4.2 4.2"><path d="M3.6 1.6 A1.6 1.6 0 1 0 3.6 2.7" fill="none" stroke="#2f6699" stroke-width="0.9"/><path d="M2.6 0.3 L4.1 0.3 L4.1 1.9 Z" fill="#2f6699"/></svg></span>Odśwież</div>
<div class="a" style="left:229px;top:146px;width:42px;height:12px;border:0.6px solid #cbd6df;border-radius:1.2px;background:#fff;box-shadow:0 0.6px 0.5px rgba(0,0,0,0.07)"></div>
<div class="t" style="left:227.3px;width:45.69999999999999px;text-align:center;top:152px;font-size:4.8px;color:#4a7eab;-webkit-text-stroke-width:0.05px"><span style="display:inline-block;position:relative;width:5.4px;height:0"><svg style="position:absolute;left:0;top:-4.0px" width="4.2" height="4.2" viewBox="0 0 4.2 4.2"><path d="M1.5 0 L2.7 0 L2.7 1.8 L3.6 1.8 L2.1 3.2 L0.6 1.8 L1.5 1.8 Z" fill="#2f6699"/><rect x="0" y="3.3" width="4.2" height="0.9" fill="#2f6699"/></svg></span>Pobierz<span style="display:inline-block;position:relative;width:7.2px;height:0"><svg style="position:absolute;left:2.2px;top:-3.6px" width="5" height="3.2" viewBox="0 0 5 3.2"><path d="M0.6 0.6 L2.5 2.5 L4.4 0.6" fill="none" stroke="#2a5e8e" stroke-width="1.25"/></svg></span></div>
<div class="a" style="left:274px;top:146px;width:59px;height:12px;border:0.6px solid #cbd6df;border-radius:1.2px;background:#fff;box-shadow:0 0.6px 0.5px rgba(0,0,0,0.07)"></div>
<div class="t" style="left:272.0px;width:62.69999999999999px;text-align:center;top:152px;font-size:4.8px;color:#4a7eab;-webkit-text-stroke-width:0.05px"><span style="display:inline-block;position:relative;width:5.8px;height:0"><svg style="position:absolute;left:0;top:-3.5px" width="4.6" height="3.6" viewBox="0 0 4.6 3.6"><path d="M0.3 3.4 L0.3 2.2 Q0.6 0.2 2.3 0.2 Q4 0.2 4.3 2.2 L4.3 3.4 Z" fill="#2f6699"/><rect x="1.5" y="1" width="1.6" height="1" fill="#fff"/></svg></span>Wybierz czujnik<span style="display:inline-block;position:relative;width:7.2px;height:0"><svg style="position:absolute;left:2.2px;top:-3.6px" width="5" height="3.2" viewBox="0 0 5 3.2"><path d="M0.6 0.6 L2.5 2.5 L4.4 0.6" fill="none" stroke="#2a5e8e" stroke-width="1.25"/></svg></span></div>
<div class="a" style="left:335px;top:146px;width:52px;height:12px;border:0.6px solid #cbd6df;border-radius:1.2px;background:#fff;box-shadow:0 0.6px 0.5px rgba(0,0,0,0.07)"></div>
<div class="t" style="left:333.3px;width:55.39999999999998px;text-align:center;top:152px;font-size:4.8px;color:#4a7eab;-webkit-text-stroke-width:0.05px"><span style="display:inline-block;position:relative;width:5.2px;height:0"><svg style="position:absolute;left:0;top:-3.7px" width="4" height="4" viewBox="0 0 4 4"><circle cx="2" cy="2" r="2" fill="#2f6699"/><rect x="1.6" y="0.8" width="0.8" height="1.6" fill="#fff"/><rect x="1.6" y="2.8" width="0.8" height="0.6" fill="#fff"/></svg></span>Dostępność<span style="display:inline-block;position:relative;width:7.2px;height:0"><svg style="position:absolute;left:2.2px;top:-3.6px" width="5" height="3.2" viewBox="0 0 5 3.2"><path d="M0.6 0.6 L2.5 2.5 L4.4 0.6" fill="none" stroke="#2a5e8e" stroke-width="1.25"/></svg></span></div>
<div class="a" style="left:389px;top:146px;width:74px;height:12px;border:0.6px solid #cbd6df;border-radius:1.2px;background:#fff;box-shadow:0 0.6px 0.5px rgba(0,0,0,0.07)"></div>
<div class="t" style="left:387.3px;width:77.39999999999998px;text-align:center;top:152px;font-size:4.8px;color:#4a7eab;-webkit-text-stroke-width:0.05px"><span style="display:inline-block;position:relative;width:5.8px;height:0"><svg style="position:absolute;left:0;top:-3.4px" width="4.6" height="3.6" viewBox="0 0 4.6 3.6"><path d="M0 3.6 L0 0.4 L0.5 0.4 L0.5 3.1 L4.6 3.1 L4.6 3.6 Z M1 3 L1 1.8 L2 0.8 L3 1.8 L4.2 0.6 L4.2 3 Z" fill="#2f6699"/></svg></span>Rozszerzenie wykresu<span style="display:inline-block;position:relative;width:7.2px;height:0"><svg style="position:absolute;left:2.2px;top:-3.6px" width="5" height="3.2" viewBox="0 0 5 3.2"><path d="M0.6 0.6 L2.5 2.5 L4.4 0.6" fill="none" stroke="#2a5e8e" stroke-width="1.25"/></svg></span></div>
<svg style="left:718px;top:148.8px" width="10.2" height="8" viewBox="0 0 10.2 8"><rect x="0.0" y="0.0" width="2.8" height="2.2" fill="#1a6fb0"/><rect x="3.6" y="0.0" width="2.8" height="2.2" fill="#1a6fb0"/><rect x="7.2" y="0.0" width="2.8" height="2.2" fill="#1a6fb0"/><rect x="0.0" y="2.9" width="2.8" height="2.2" fill="#1a6fb0"/><rect x="3.6" y="2.9" width="2.8" height="2.2" fill="#1a6fb0"/><rect x="7.2" y="2.9" width="2.8" height="2.2" fill="#1a6fb0"/><rect x="0.0" y="5.8" width="2.8" height="2.2" fill="#1a6fb0"/><rect x="3.6" y="5.8" width="2.8" height="2.2" fill="#1a6fb0"/><rect x="7.2" y="5.8" width="2.8" height="2.2" fill="#1a6fb0"/></svg>
<svg style="left:735.9px;top:148.8px" width="10.2" height="8" viewBox="0 0 10.2 8"><rect x="0" y="0.0" width="10.2" height="1.5" fill="#1a6fb0"/><rect x="0" y="2.05" width="10.2" height="1.5" fill="#1a6fb0"/><rect x="0" y="4.1" width="10.2" height="1.5" fill="#1a6fb0"/><rect x="0" y="6.1499999999999995" width="10.2" height="1.5" fill="#1a6fb0"/></svg>
<div class="a" style="left:86px;top:171px;width:172px;height:108px;background:#f9f9f9"></div>
<div class="a" style="left:248px;top:173px;width:8px;height:7px;background:#1677bb;border-radius:0.8px"></div>
<svg style="left:249.79999999999998px;top:175.3px" width="4.2" height="2.6" viewBox="0 0 4.2 2.6"><path d="M0.5 0.5 L2.1 2.1 L3.7 0.5" fill="none" stroke="#fff" stroke-width="0.9"/></svg>
<div class="t" style="left:85.60000000000001px;width:172.4px;text-align:center;top:183px;font-size:5.5px;color:#5c5c5c;-webkit-text-stroke-width:0.02px;letter-spacing:0.14px">Temperatura(°C) : 11.3°C</div>
<div class="a" style="left:264px;top:171px;width:173px;height:108px;background:#f9f9f9"></div>
<div class="a" style="left:426px;top:173px;width:9px;height:7px;background:#1677bb;border-radius:0.8px"></div>
<svg style="left:428.3px;top:175.3px" width="4.2" height="2.6" viewBox="0 0 4.2 2.6"><path d="M0.5 0.5 L2.1 2.1 L3.7 0.5" fill="none" stroke="#fff" stroke-width="0.9"/></svg>
<div class="t" style="left:264.1px;width:172.4px;text-align:center;top:183px;font-size:5.5px;color:#5c5c5c;-webkit-text-stroke-width:0.02px;letter-spacing:0.14px">Wilgotność(%) : 61.0%</div>
<div class="a" style="left:443px;top:171px;width:172px;height:108px;background:#f9f9f9"></div>
<div class="a" style="left:605px;top:173px;width:8px;height:7px;background:#1677bb;border-radius:0.8px"></div>
<svg style="left:607.0px;top:175.3px" width="4.2" height="2.6" viewBox="0 0 4.2 2.6"><path d="M0.5 0.5 L2.1 2.1 L3.7 0.5" fill="none" stroke="#fff" stroke-width="0.9"/></svg>
<div class="t" style="left:442.8px;width:172.4px;text-align:center;top:183px;font-size:5.5px;color:#5c5c5c;-webkit-text-stroke-width:0.02px;letter-spacing:0.14px">Napięcie(V) : 5.0V</div>
<div class="a" style="left:86px;top:289px;width:172px;height:108px;background:#f9f9f9"></div>
<div class="a" style="left:248px;top:291px;width:8px;height:7px;background:#1677bb;border-radius:0.8px"></div>
<svg style="left:249.79999999999998px;top:293.29999999999995px" width="4.2" height="2.6" viewBox="0 0 4.2 2.6"><path d="M0.5 0.5 L2.1 2.1 L3.7 0.5" fill="none" stroke="#fff" stroke-width="0.9"/></svg>
<div class="t" style="left:85.60000000000001px;width:172.4px;text-align:center;top:301px;font-size:5.5px;color:#5c5c5c;-webkit-text-stroke-width:0.02px;letter-spacing:0.14px">WiFi RSSI(dBm) : -60.0dBm</div>
<div class="a" style="left:264px;top:289px;width:173px;height:108px;background:#f9f9f9"></div>
<div class="a" style="left:426px;top:291px;width:9px;height:7px;background:#1677bb;border-radius:0.8px"></div>
<svg style="left:428.3px;top:293.29999999999995px" width="4.2" height="2.6" viewBox="0 0 4.2 2.6"><path d="M0.5 0.5 L2.1 2.1 L3.7 0.5" fill="none" stroke="#fff" stroke-width="0.9"/></svg>
<div class="t" style="left:264.1px;width:172.4px;text-align:center;top:301px;font-size:5.5px;color:#5c5c5c;-webkit-text-stroke-width:0.02px;letter-spacing:0.14px">Punkt rosy(°C) : 4.0</div>
<svg style="left:0;top:0" width="750" height="421" viewBox="0 0 750 421"><line x1="99.7" y1="209.2" x2="255.6" y2="209.2" stroke="#dcdcdc" stroke-width="0.45"/><line x1="98.5" y1="209.2" x2="99.7" y2="209.2" stroke="#aaa" stroke-width="0.4"/><text x="97.5" y="210.2" font-size="3.2" fill="#777" text-anchor="end" font-family="Liberation Sans">12</text><line x1="99.7" y1="220.6" x2="255.6" y2="220.6" stroke="#dcdcdc" stroke-width="0.45"/><line x1="98.5" y1="220.6" x2="99.7" y2="220.6" stroke="#aaa" stroke-width="0.4"/><text x="97.5" y="221.6" font-size="3.2" fill="#777" text-anchor="end" font-family="Liberation Sans">9</text><line x1="99.7" y1="231.7" x2="255.6" y2="231.7" stroke="#dcdcdc" stroke-width="0.45"/><line x1="98.5" y1="231.7" x2="99.7" y2="231.7" stroke="#aaa" stroke-width="0.4"/><text x="97.5" y="232.7" font-size="3.2" fill="#777" text-anchor="end" font-family="Liberation Sans">6</text><line x1="99.7" y1="243" x2="255.6" y2="243" stroke="#dcdcdc" stroke-width="0.45"/><line x1="98.5" y1="243" x2="99.7" y2="243" stroke="#aaa" stroke-width="0.4"/><text x="97.5" y="244.0" font-size="3.2" fill="#777" text-anchor="end" font-family="Liberation Sans">3</text><line x1="99.7" y1="254.1" x2="255.6" y2="254.1" stroke="#dcdcdc" stroke-width="0.45"/><line x1="98.5" y1="254.1" x2="99.7" y2="254.1" stroke="#aaa" stroke-width="0.4"/><text x="97.5" y="255.1" font-size="3.2" fill="#777" text-anchor="end" font-family="Liberation Sans">0</text><line x1="99.7" y1="265.2" x2="255.6" y2="265.2" stroke="#dcdcdc" stroke-width="0.45"/><line x1="98.5" y1="265.2" x2="99.7" y2="265.2" stroke="#aaa" stroke-width="0.4"/><text x="97.5" y="266.2" font-size="3.2" fill="#777" text-anchor="end" font-family="Liberation Sans">-3</text><line x1="99.7" y1="198.6" x2="99.7" y2="266.4" stroke="#999" stroke-width="0.5"/><line x1="99.7" y1="266.4" x2="255.6" y2="266.4" stroke="#999" stroke-width="0.5"/><line x1="103" y1="266.4" x2="103" y2="267.59999999999997" stroke="#999" stroke-width="0.4"/><text x="103" y="272.79999999999995" font-size="3.2" fill="#777" text-anchor="middle" font-family="Liberation Sans">03-27 09:00</text><line x1="153.7" y1="266.4" x2="153.7" y2="267.59999999999997" stroke="#999" stroke-width="0.4"/><text x="153.7" y="272.79999999999995" font-size="3.2" fill="#777" text-anchor="middle" font-family="Liberation Sans">03-27 17:00</text><line x1="204.4" y1="266.4" x2="204.4" y2="267.59999999999997" stroke="#999" stroke-width="0.4"/><text x="204.4" y="272.79999999999995" font-size="3.2" fill="#777" text-anchor="middle" font-family="Liberation Sans">03-28 01:00</text><line x1="99.7" y1="214.8" x2="255.6" y2="214.8" stroke="#9ec4e4" stroke-width="0.4" stroke-dasharray="1,0.8"/><polyline points="99.8,219.6 117,218.6 140,217.8 160,216.8 170,216.2 182,212.2 195,211.6 205,211.1 220,211.3 231.4,211.7 240,211.6 251.2,211.3" fill="none" stroke="#3d89c2" stroke-width="1.0"/><path d="M212.3 211.0 L210.5 207.5 A2.1 2.1 0 1 1 214.10000000000002 207.5 Z" fill="#d93c3c"/><circle cx="212.3" cy="206.7" r="0.8" fill="#fff"/><text x="212.3" y="216.6" font-size="4.0" fill="#444" text-anchor="middle" font-family="Liberation Sans">11.4</text><path d="M101.8 219.20000000000002 L100.0 215.70000000000002 A2.1 2.1 0 1 1 103.6 215.70000000000002 Z" fill="#3aa64a"/><circle cx="101.8" cy="214.9" r="0.8" fill="#fff"/><text x="101.5" y="224.4" font-size="4.0" fill="#444" text-anchor="middle" font-family="Liberation Sans">9.2</text><text x="251.6" y="209.4" font-size="3.6" fill="#d93c3c" text-anchor="middle" font-family="Liberation Sans">11.3</text><text x="86.6" y="216.2" font-size="3.2" fill="#3b6db5" text-anchor="start" font-family="Liberation Sans">Średn</text><text x="86.6" y="220.6" font-size="3.2" fill="#3b6db5" text-anchor="start" font-family="Liberation Sans">ia: 10.</text><text x="86.6" y="225.6" font-size="3.2" fill="#3b6db5" text-anchor="start" font-family="Liberation Sans">5</text><line x1="277.6" y1="198.8" x2="434" y2="198.8" stroke="#dcdcdc" stroke-width="0.45"/><line x1="276.40000000000003" y1="198.8" x2="277.6" y2="198.8" stroke="#aaa" stroke-width="0.4"/><text x="275.40000000000003" y="199.8" font-size="3.2" fill="#777" text-anchor="end" font-family="Liberation Sans">80</text><line x1="277.6" y1="212.6" x2="434" y2="212.6" stroke="#dcdcdc" stroke-width="0.45"/><line x1="276.40000000000003" y1="212.6" x2="277.6" y2="212.6" stroke="#aaa" stroke-width="0.4"/><text x="275.40000000000003" y="213.6" font-size="3.2" fill="#777" text-anchor="end" font-family="Liberation Sans">60</text><line x1="277.6" y1="226.3" x2="434" y2="226.3" stroke="#dcdcdc" stroke-width="0.45"/><line x1="276.40000000000003" y1="226.3" x2="277.6" y2="226.3" stroke="#aaa" stroke-width="0.4"/><text x="275.40000000000003" y="227.3" font-size="3.2" fill="#777" text-anchor="end" font-family="Liberation Sans">40</text><line x1="277.6" y1="240.3" x2="434" y2="240.3" stroke="#dcdcdc" stroke-width="0.45"/><line x1="276.40000000000003" y1="240.3" x2="277.6" y2="240.3" stroke="#aaa" stroke-width="0.4"/><text x="275.40000000000003" y="241.3" font-size="3.2" fill="#777" text-anchor="end" font-family="Liberation Sans">20</text><line x1="277.6" y1="254.1" x2="434" y2="254.1" stroke="#dcdcdc" stroke-width="0.45"/><line x1="276.40000000000003" y1="254.1" x2="277.6" y2="254.1" stroke="#aaa" stroke-width="0.4"/><text x="275.40000000000003" y="255.1" font-size="3.2" fill="#777" text-anchor="end" font-family="Liberation Sans">0</text><line x1="277.6" y1="198.3" x2="277.6" y2="267.1" stroke="#999" stroke-width="0.5"/><line x1="277.6" y1="267.1" x2="434" y2="267.1" stroke="#999" stroke-width="0.5"/><line x1="281.5" y1="267.1" x2="281.5" y2="268.3" stroke="#999" stroke-width="0.4"/><text x="281.5" y="272.79999999999995" font-size="3.2" fill="#777" text-anchor="middle" font-family="Liberation Sans">03-27 09:00</text><line x1="332.5" y1="267.1" x2="332.5" y2="268.3" stroke="#999" stroke-width="0.4"/><text x="332.5" y="272.79999999999995" font-size="3.2" fill="#777" text-anchor="middle" font-family="Liberation Sans">03-27 17:00</text><line x1="383.5" y1="267.1" x2="383.5" y2="268.3" stroke="#999" stroke-width="0.4"/><text x="383.5" y="272.79999999999995" font-size="3.2" fill="#777" text-anchor="middle" font-family="Liberation Sans">03-28 01:00</text><polyline points="278,213 290,212.6 310,212.6 330,212.3 340,212.2 345,211.6 350,212.4 355,211.8 365,211.9 372,212.8 380,213.2 385,212.6 400,212.8 412,212.3 420,212.5 428,212.3 431.7,212.1" fill="none" stroke="#c8435c" stroke-width="0.95"/><path d="M340.3 211.0 L338.5 207.5 A2.1 2.1 0 1 1 342.1 207.5 Z" fill="#d93c3c"/><circle cx="340.3" cy="206.7" r="0.8" fill="#fff"/><text x="340.3" y="216.2" font-size="4.0" fill="#444" text-anchor="middle" font-family="Liberation Sans">62.0</text><path d="M275.6 211.8 L273.8 208.3 A2.1 2.1 0 1 1 277.40000000000003 208.3 Z" fill="#3aa64a"/><circle cx="275.6" cy="207.5" r="0.8" fill="#fff"/><text x="276.6" y="218" font-size="4.0" fill="#444" text-anchor="middle" font-family="Liberation Sans">60.0</text><text x="429.8" y="209.6" font-size="3.6" fill="#d93c3c" text-anchor="middle" font-family="Liberation Sans">61.0</text><text x="264.6" y="212.3" font-size="3.2" fill="#3b6db5" text-anchor="start" font-family="Liberation Sans">Średn</text><text x="264.6" y="217.1" font-size="3.2" fill="#3b6db5" text-anchor="start" font-family="Liberation Sans">ia:6</text><text x="264.6" y="222.1" font-size="3.2" fill="#3b6db5" text-anchor="start" font-family="Liberation Sans">0</text><line x1="456.6" y1="207.3" x2="612.8" y2="207.3" stroke="#dcdcdc" stroke-width="0.45"/><line x1="455.40000000000003" y1="207.3" x2="456.6" y2="207.3" stroke="#aaa" stroke-width="0.4"/><text x="454.40000000000003" y="208.3" font-size="3.2" fill="#777" text-anchor="end" font-family="Liberation Sans">6</text><line x1="456.6" y1="223.2" x2="612.8" y2="223.2" stroke="#dcdcdc" stroke-width="0.45"/><line x1="455.40000000000003" y1="223.2" x2="456.6" y2="223.2" stroke="#aaa" stroke-width="0.4"/><text x="454.40000000000003" y="224.2" font-size="3.2" fill="#777" text-anchor="end" font-family="Liberation Sans">4</text><line x1="456.6" y1="238.7" x2="612.8" y2="238.7" stroke="#dcdcdc" stroke-width="0.45"/><line x1="455.40000000000003" y1="238.7" x2="456.6" y2="238.7" stroke="#aaa" stroke-width="0.4"/><text x="454.40000000000003" y="239.7" font-size="3.2" fill="#777" text-anchor="end" font-family="Liberation Sans">2</text><line x1="456.6" y1="254.1" x2="612.8" y2="254.1" stroke="#dcdcdc" stroke-width="0.45"/><line x1="455.40000000000003" y1="254.1" x2="456.6" y2="254.1" stroke="#aaa" stroke-width="0.4"/><text x="454.40000000000003" y="255.1" font-size="3.2" fill="#777" text-anchor="end" font-family="Liberation Sans">0</text><line x1="456.6" y1="199" x2="456.6" y2="267.1" stroke="#999" stroke-width="0.5"/><line x1="456.6" y1="267.1" x2="612.8" y2="267.1" stroke="#999" stroke-width="0.5"/><line x1="460.9" y1="267.1" x2="460.9" y2="268.3" stroke="#999" stroke-width="0.4"/><text x="460.9" y="272.79999999999995" font-size="3.2" fill="#777" text-anchor="middle" font-family="Liberation Sans">03-27 09:00</text><line x1="511.2" y1="267.1" x2="511.2" y2="268.3" stroke="#999" stroke-width="0.4"/><text x="511.2" y="272.79999999999995" font-size="3.2" fill="#777" text-anchor="middle" font-family="Liberation Sans">03-27 17:00</text><line x1="562.2" y1="267.1" x2="562.2" y2="268.3" stroke="#999" stroke-width="0.4"/><text x="562.2" y="272.79999999999995" font-size="3.2" fill="#777" text-anchor="middle" font-family="Liberation Sans">03-28 01:00</text><line x1="456.6" y1="215.2" x2="612.8" y2="215.2" stroke="#c4d8ea" stroke-width="0.4"/><line x1="475.1" y1="215.2" x2="608.5" y2="215.2" stroke="#c64fcf" stroke-width="0.7"/><circle cx="494" cy="215.2" r="0.5" fill="#d070d0"/><circle cx="513" cy="215.2" r="0.5" fill="#d070d0"/><circle cx="532" cy="215.2" r="0.5" fill="#d070d0"/><circle cx="551" cy="215.2" r="0.5" fill="#d070d0"/><circle cx="570" cy="215.2" r="0.5" fill="#d070d0"/><circle cx="589" cy="215.2" r="0.5" fill="#d070d0"/><circle cx="608" cy="215.2" r="0.5" fill="#d070d0"/><path d="M468.5 215.20000000000002 L466.7 211.70000000000002 A2.1 2.1 0 1 1 470.3 211.70000000000002 Z" fill="#d93c3c"/><circle cx="468.5" cy="210.9" r="0.8" fill="#fff"/><text x="468.6" y="220.2" font-size="4.0" fill="#444" text-anchor="middle" font-family="Liberation Sans">5.0</text><text x="607.3" y="212.8" font-size="3.6" fill="#d93c3c" text-anchor="middle" font-family="Liberation Sans">5.0</text><text x="444" y="215.6" font-size="3.2" fill="#3b6db5" text-anchor="start" font-family="Liberation Sans">Średn</text><text x="444" y="220.6" font-size="3.2" fill="#3b6db5" text-anchor="start" font-family="Liberation Sans">ia:5.0</text><line x1="99.8" y1="329.2" x2="254.8" y2="329.2" stroke="#dcdcdc" stroke-width="0.45"/><line x1="98.6" y1="329.2" x2="99.8" y2="329.2" stroke="#aaa" stroke-width="0.4"/><text x="97.6" y="330.2" font-size="3.2" fill="#777" text-anchor="end" font-family="Liberation Sans">0</text><line x1="99.8" y1="342.7" x2="254.8" y2="342.7" stroke="#dcdcdc" stroke-width="0.45"/><line x1="98.6" y1="342.7" x2="99.8" y2="342.7" stroke="#aaa" stroke-width="0.4"/><text x="97.6" y="343.7" font-size="3.2" fill="#777" text-anchor="end" font-family="Liberation Sans">-20</text><line x1="99.8" y1="356.3" x2="254.8" y2="356.3" stroke="#dcdcdc" stroke-width="0.45"/><line x1="98.6" y1="356.3" x2="99.8" y2="356.3" stroke="#aaa" stroke-width="0.4"/><text x="97.6" y="357.3" font-size="3.2" fill="#777" text-anchor="end" font-family="Liberation Sans">-40</text><line x1="99.8" y1="369.9" x2="254.8" y2="369.9" stroke="#dcdcdc" stroke-width="0.45"/><line x1="98.6" y1="369.9" x2="99.8" y2="369.9" stroke="#aaa" stroke-width="0.4"/><line x1="99.8" y1="383.1" x2="254.8" y2="383.1" stroke="#dcdcdc" stroke-width="0.45"/><line x1="98.6" y1="383.1" x2="99.8" y2="383.1" stroke="#aaa" stroke-width="0.4"/><text x="97.6" y="384.1" font-size="3.2" fill="#777" text-anchor="end" font-family="Liberation Sans">-80</text><line x1="99.8" y1="316.1" x2="99.8" y2="384.4" stroke="#999" stroke-width="0.5"/><line x1="99.8" y1="384.4" x2="254.8" y2="384.4" stroke="#999" stroke-width="0.5"/><line x1="103.4" y1="384.4" x2="103.4" y2="385.59999999999997" stroke="#999" stroke-width="0.4"/><text x="103.4" y="390.59999999999997" font-size="3.2" fill="#777" text-anchor="middle" font-family="Liberation Sans">03-27 09:00</text><line x1="153.9" y1="384.4" x2="153.9" y2="385.59999999999997" stroke="#999" stroke-width="0.4"/><text x="153.9" y="390.59999999999997" font-size="3.2" fill="#777" text-anchor="middle" font-family="Liberation Sans">03-27 17:00</text><line x1="204.7" y1="384.4" x2="204.7" y2="385.59999999999997" stroke="#999" stroke-width="0.4"/><text x="204.7" y="390.59999999999997" font-size="3.2" fill="#777" text-anchor="middle" font-family="Liberation Sans">03-28 01:00</text><polyline points="101.2,368.9 103.1,368.7 105.0,368.6 107.0,369.0 108.9,368.5 110.8,368.9 112.9,368.4 115.0,367.8 117.6,371.6 119.3,367.8 121.1,367.8 123.0,367.6 124.8,367.2 126.6,367.6 128.4,367.1 130.3,367.4 132.1,367.4 133.2,366.1 134.2,367.6 135.9,367.3 137.6,367.3 139.3,367.7 141.0,368.1 142.8,367.5 144.5,367.6 146.2,368.0 147.9,368.3 149.6,368.0 151.3,368.0 153.1,367.6 154.9,367.9 156.7,366.7 158.4,367.2 160.2,366.4 162.0,366.3 163.8,365.8 165.5,365.6 167.3,365.6 169.1,365.9 170.8,365.1 172.6,365.2 174.4,365.5 176.2,365.8 177.9,365.8 179.7,366.2 181.5,366.1 183.3,366.7 185.0,366.7 186.6,367.2 188.3,368.0 190.0,368.1 191.7,368.4 193.3,369.0 195.0,369.3 198.2,367.0 199.9,367.3 201.6,367.6 203.3,368.4 204.9,368.7 206.6,368.6 208.3,369.3 210.0,369.6 212.0,367.2 213.8,367.3 215.5,367.6 217.2,367.6 219.0,367.2 220.8,367.9 222.5,367.2 224.2,367.5 226.0,367.6 227.7,367.8 229.4,367.3 231.1,367.6 232.8,367.2 234.5,367.8 236.2,367.8 237.9,367.7 239.6,367.9 241.3,367.4 243.0,367.6 245.1,371.4 248.0,370.2 249.8,370.3 251.5,370.4" fill="none" stroke="#2a9488" stroke-width="0.9"/><path d="M168.6 365.2 L166.79999999999998 361.7 A2.1 2.1 0 1 1 170.4 361.7 Z" fill="#d93c3c"/><circle cx="168.6" cy="360.90000000000003" r="0.8" fill="#fff"/><text x="168.8" y="370.2" font-size="4.0" fill="#444" text-anchor="middle" font-family="Liberation Sans">-53.0</text><path d="M112.4 371.59999999999997 L110.60000000000001 368.09999999999997 A2.1 2.1 0 1 1 114.2 368.09999999999997 Z" fill="#3aa64a"/><circle cx="112.4" cy="367.3" r="0.8" fill="#fff"/><text x="112.4" y="377" font-size="4.0" fill="#444" text-anchor="middle" font-family="Liberation Sans">-63.0</text><text x="251.6" y="367.4" font-size="3.6" fill="#d93c3c" text-anchor="middle" font-family="Liberation Sans">-60.0</text><text x="86.6" y="368.4" font-size="3.2" fill="#3b6db5" text-anchor="start" font-family="Liberation Sans">Średn</text><text x="86.6" y="373.1" font-size="3.2" fill="#3b6db5" text-anchor="start" font-family="Liberation Sans">ia: -56</text><text x="86.6" y="378.1" font-size="3.2" fill="#3b6db5" text-anchor="start" font-family="Liberation Sans">.8</text><line x1="277.9" y1="332" x2="434.1" y2="332" stroke="#dcdcdc" stroke-width="0.45"/><line x1="276.7" y1="332" x2="277.9" y2="332" stroke="#aaa" stroke-width="0.4"/><text x="275.7" y="333.0" font-size="3.2" fill="#777" text-anchor="end" font-family="Liberation Sans">4</text><line x1="277.9" y1="352.2" x2="434.1" y2="352.2" stroke="#dcdcdc" stroke-width="0.45"/><line x1="276.7" y1="352.2" x2="277.9" y2="352.2" stroke="#aaa" stroke-width="0.4"/><line x1="277.9" y1="371.7" x2="434.1" y2="371.7" stroke="#dcdcdc" stroke-width="0.45"/><line x1="276.7" y1="371.7" x2="277.9" y2="371.7" stroke="#aaa" stroke-width="0.4"/><text x="275.7" y="372.7" font-size="3.2" fill="#777" text-anchor="end" font-family="Liberation Sans">0</text><line x1="277.9" y1="316.6" x2="277.9" y2="384.4" stroke="#999" stroke-width="0.5"/><line x1="277.9" y1="384.4" x2="434.1" y2="384.4" stroke="#999" stroke-width="0.5"/><line x1="282.2" y1="384.4" x2="282.2" y2="385.59999999999997" stroke="#999" stroke-width="0.4"/><text x="282.2" y="390.59999999999997" font-size="3.2" fill="#777" text-anchor="middle" font-family="Liberation Sans">03-27 09:00</text><line x1="332.5" y1="384.4" x2="332.5" y2="385.59999999999997" stroke="#999" stroke-width="0.4"/><text x="332.5" y="390.59999999999997" font-size="3.2" fill="#777" text-anchor="middle" font-family="Liberation Sans">03-27 17:00</text><line x1="383.5" y1="384.4" x2="383.5" y2="385.59999999999997" stroke="#999" stroke-width="0.4"/><text x="383.5" y="390.59999999999997" font-size="3.2" fill="#777" text-anchor="middle" font-family="Liberation Sans">03-28 01:00</text><line x1="277.9" y1="340.4" x2="434.1" y2="340.4" stroke="#b4c2dc" stroke-width="0.5"/><polyline points="279.5,354.1 285.7,354.1 290.5,351.5 304.7,349.6 311.8,348.6 323.7,346.3 340.3,344 343.9,340.6 346.3,343 357,335 362.9,332.3 367.6,333 368.8,335.4 377.1,335.4 379.5,331.4 385.4,330.9 396.1,330.9 399.7,332 410.3,332.5 412,335 413.9,332.3 428.2,332.3" fill="none" stroke="#dba8ec" stroke-width="0.6"/><path d="M428.9 328.79999999999995 L427.09999999999997 325.29999999999995 A2.1 2.1 0 1 1 430.7 325.29999999999995 Z" fill="#d93c3c"/><circle cx="428.9" cy="324.5" r="0.8" fill="#fff"/><text x="429.4" y="333.6" font-size="4.0" fill="#444" text-anchor="middle" font-family="Liberation Sans">4.5</text><text x="430.2" y="329.4" font-size="2.8" fill="#d93c3c" text-anchor="middle" font-family="Liberation Sans">4.0</text><path d="M272.7 353.79999999999995 L270.9 350.29999999999995 A2.1 2.1 0 1 1 274.5 350.29999999999995 Z" fill="#3aa64a"/><circle cx="272.7" cy="349.5" r="0.8" fill="#fff"/><text x="272.7" y="358.6" font-size="4.0" fill="#444" text-anchor="middle" font-family="Liberation Sans">1.8</text><text x="264.6" y="342" font-size="3.2" fill="#3b6db5" text-anchor="start" font-family="Liberation Sans">Średn</text><text x="264.6" y="345.8" font-size="3.2" fill="#3b6db5" text-anchor="start" font-family="Liberation Sans">ia:3.3</text></svg>
</div></body></html>
